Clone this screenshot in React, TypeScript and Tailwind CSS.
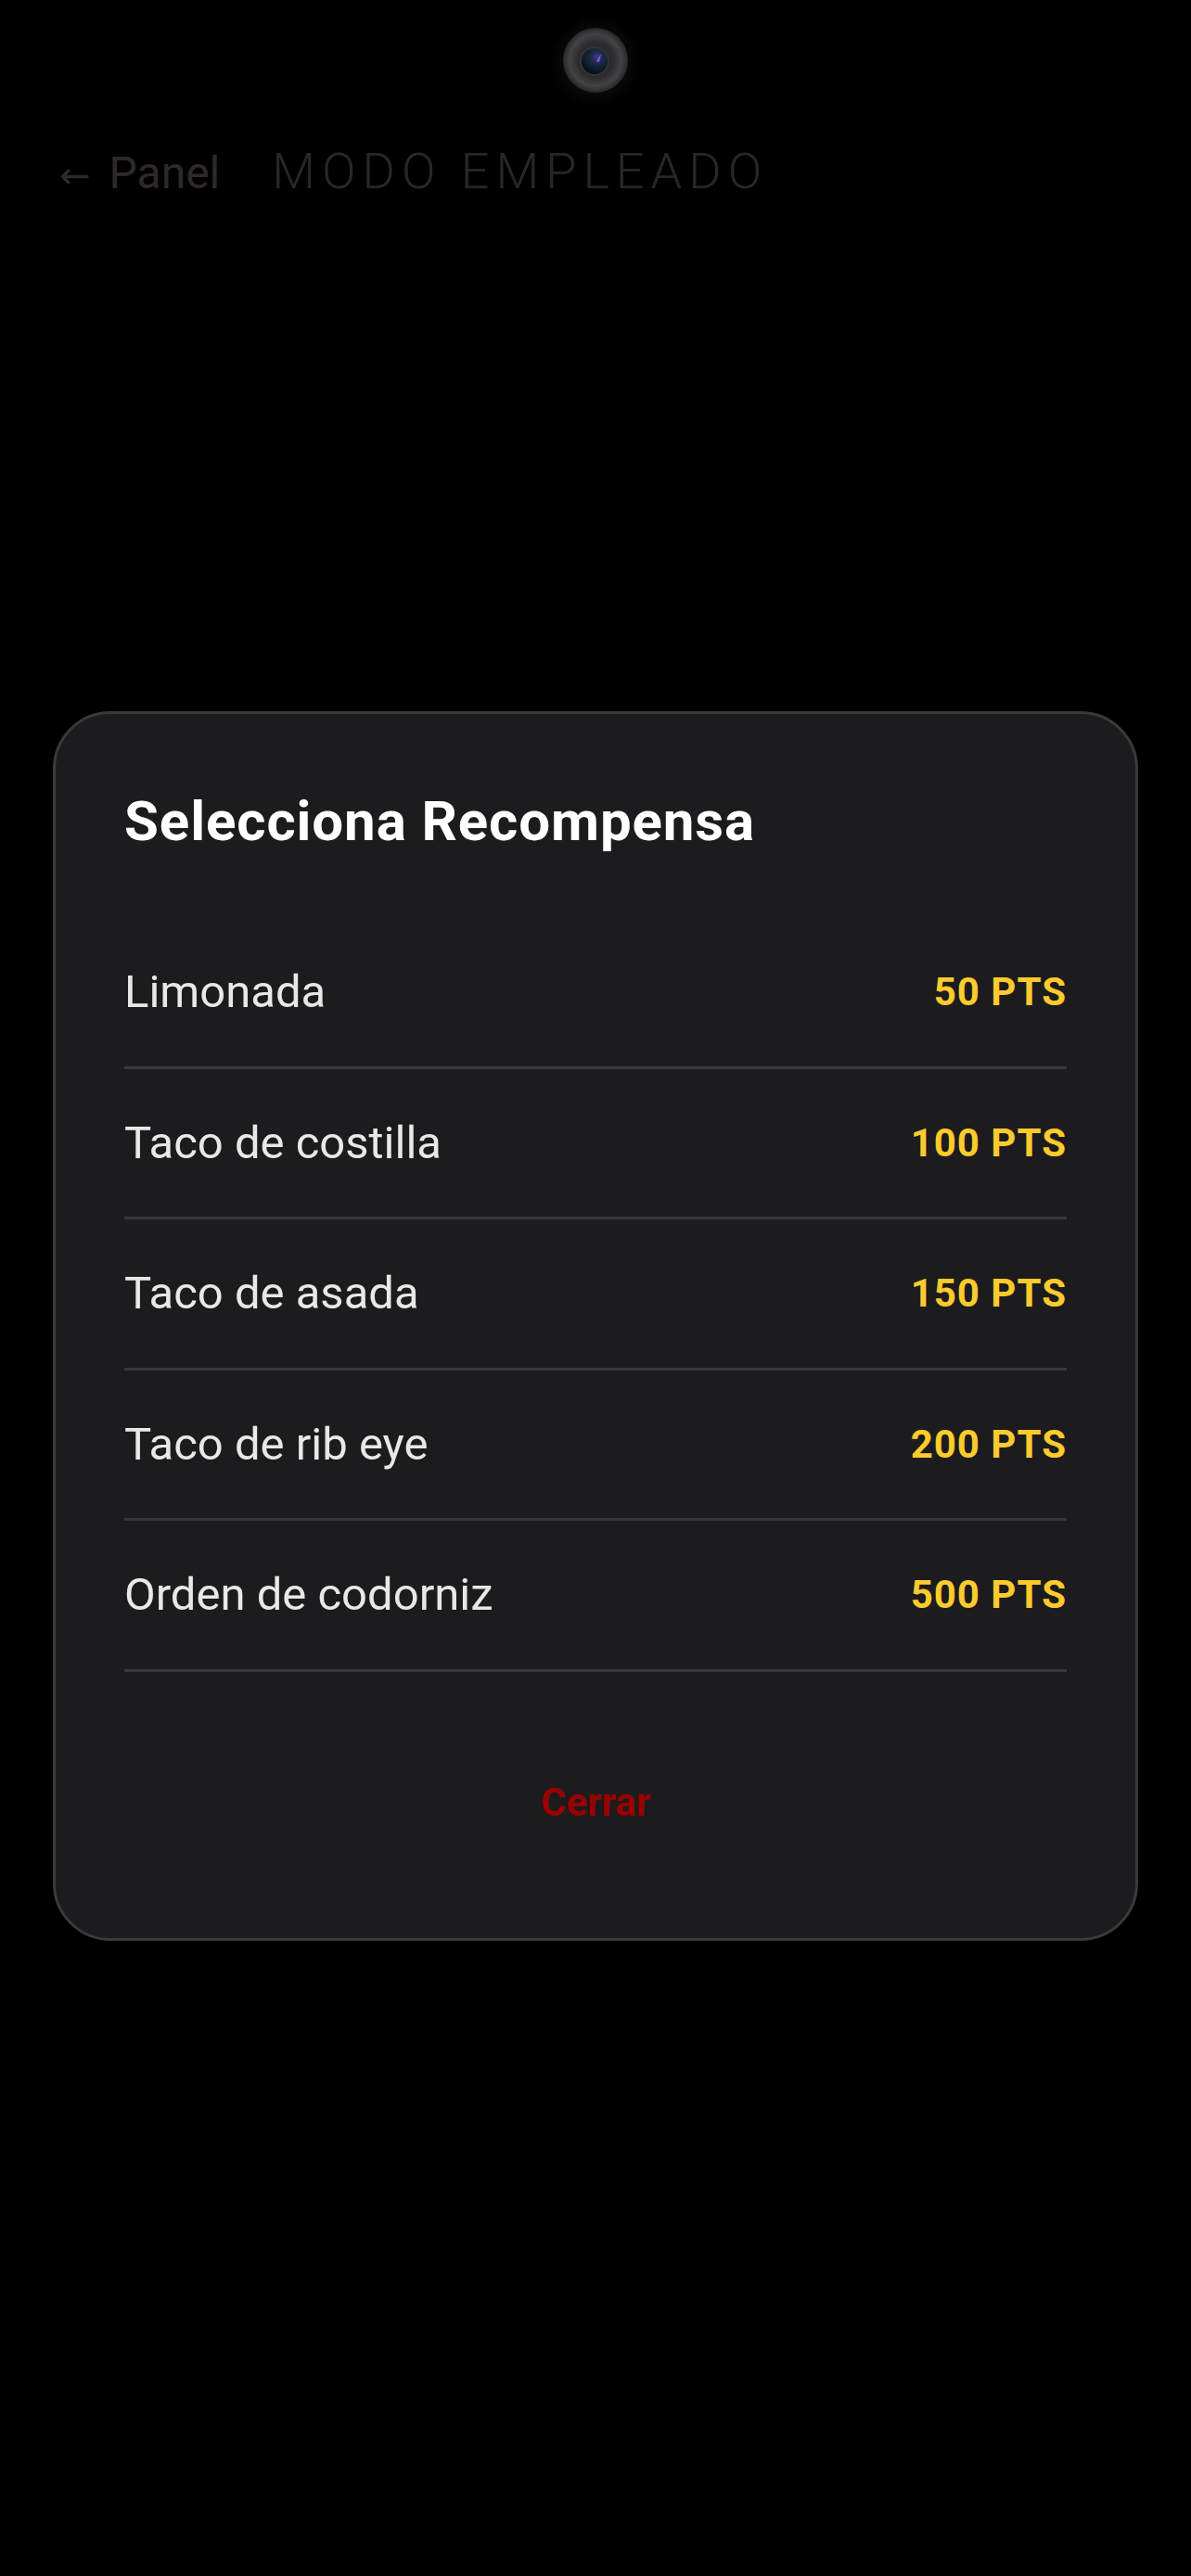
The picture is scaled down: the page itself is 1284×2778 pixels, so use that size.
const rewards = [
  { name: 'Limonada', points: 50 },
  { name: 'Taco de costilla', points: 100 },
  { name: 'Taco de asada', points: 150 },
  { name: 'Taco de rib eye', points: 200 },
  { name: 'Orden de codorniz', points: 500 },
];

// punch-hole front camera sitting over the status bar
function Camera() {
  return (
    <svg className="absolute left-[592px] top-[16px]" width="100" height="100" viewBox="0 0 100 100">
      <defs>
        <radialGradient id="halo" cx="50%" cy="50%" r="50%">
          <stop offset="60%" stopColor="#0b0b0b" />
          <stop offset="100%" stopColor="#000000" />
        </radialGradient>
        <radialGradient id="body" cx="50%" cy="50%" r="50%">
          <stop offset="0%" stopColor="#1e1e20" />
          <stop offset="55%" stopColor="#2c2c2e" />
          <stop offset="80%" stopColor="#444446" />
          <stop offset="100%" stopColor="#262628" />
        </radialGradient>
        <radialGradient id="lens" cx="60%" cy="35%" r="70%">
          <stop offset="0%" stopColor="#4a3390" />
          <stop offset="35%" stopColor="#1c2a48" />
          <stop offset="75%" stopColor="#0d1a24" />
          <stop offset="100%" stopColor="#05070a" />
        </radialGradient>
      </defs>
      <circle cx="50" cy="50" r="50" fill="url(#halo)" />
      <circle cx="50" cy="49" r="35" fill="url(#body)" />
      <circle cx="49" cy="50" r="16" fill="#3c3c3e" opacity="0.6" />
      <circle cx="49" cy="50" r="14" fill="url(#lens)" />
      <path d="M51 50 L56 42 L54 51 Z" fill="#8a66ff" opacity="0.85" />
    </svg>
  );
}

export default function App() {
  return (
    <div className="relative min-h-[2778px] w-[1284px] bg-black font-['Roboto','DejaVu_Sans',sans-serif]">
      <Camera />

      {/* header behind the modal */}
      <div className="flex h-[216px] items-baseline pt-[153px] pl-[64px]">
        <span className="text-[40px] leading-[56px] text-[#2f2929]">←</span>
        <span className="ml-[20px] text-[48px] leading-[56px] text-[#2f2929]">Panel</span>
        <span className="ml-[56px] text-[54px] leading-[63px] font-light tracking-[7px] text-[#272727]">
          MODO EMPLEADO
        </span>
      </div>

      {/* reward picker */}
      <div className="mx-auto mt-[551px] w-[1170px] rounded-[62px] border-[3px] border-[#3a3a3c] bg-[#1c1c1e] px-[74px] pt-[81px] pb-[122px]">
        <h2 className="mb-[69px] text-[60px] leading-[70px] font-bold tracking-[0.9px] text-white">
          Selecciona Recompensa
        </h2>

        <div className="flex flex-col">
          {rewards.map((reward) => (
            <div
              key={reward.name}
              className="flex h-[162.5px] items-center justify-between border-b-[3px] border-[#38383a]"
            >
              <span className="text-[49px] leading-[57px] text-[#e8e8e8]">{reward.name}</span>
              <span className="text-[42px] leading-[49px] font-bold tracking-[1px] text-[#fdcb2d]">
                {reward.points} PTS
              </span>
            </div>
          ))}
        </div>

        <div className="mt-[116px] flex justify-center">
          <button className="text-[42px] leading-[49px] font-bold text-[#990000]">Cerrar</button>
        </div>
      </div>
    </div>
  );
}
